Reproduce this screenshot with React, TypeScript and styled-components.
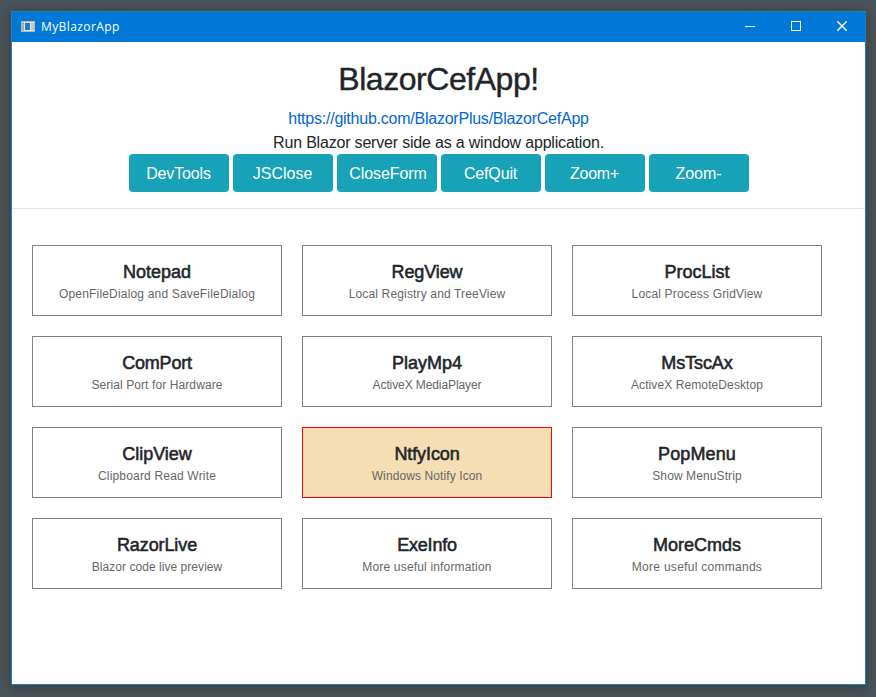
import React from "react";
import styled, { createGlobalStyle } from "styled-components";

const GlobalStyle = createGlobalStyle`
  *, *::before, *::after { box-sizing: border-box; }
  html, body { margin: 0; height: 100%; overflow: hidden; }
  body { font-family: "Liberation Sans", Arial, sans-serif; color: #212529; }
  #root { height: 100%; }
`;

const Desktop = styled.div`
  height: 697px;
  width: 876px;
  padding: 11px 10px 12px 11px;
  background: #4b545b;
  overflow: hidden;
`;

const AppWindow = styled.main`
  height: 674px;
  display: flex;
  flex-direction: column;
  border: 1px solid #1b7fd0;
  background: #fff;
  box-shadow: 0 2px 12px 1px rgba(48, 50, 38, 0.6);
`;

const TitleBar = styled.header`
  height: 30px;
  flex: none;
  display: flex;
  align-items: center;
  padding-left: 9px;
  background: #0078d7;
  color: #fff;
`;

const WindowTitle = styled.span`
  flex: 1;
  margin-left: 6px;
  font: 12px/16px "Open Sans", "Noto Sans", sans-serif;
  letter-spacing: 0.4px;
`;

const WindowButton = styled.span`
  width: 46px;
  height: 30px;
  display: flex;
  align-items: center;
  justify-content: center;
`;

const Hero = styled.section`
  height: 167px;
  flex: none;
  display: flex;
  flex-direction: column;
  align-items: center;
  padding-top: 18px;
  border-bottom: 1px solid #e5e5e5;
`;

const Heading = styled.h1`
  margin: 0 0 9px;
  font-size: 32px;
  line-height: 38px;
  font-weight: 400;
  letter-spacing: -0.45px;
  -webkit-text-stroke: 0.4px currentColor;
`;

const Line = styled.div<{ $spacing: number }>`
  font-size: 16px;
  line-height: 24px;
  white-space: nowrap;
  letter-spacing: ${(p) => p.$spacing}px;
`;

const Link = styled.a`
  color: #0366d6;
  text-decoration: none;
`;

const Actions = styled.div`
  display: flex;
  gap: 4px;
  margin-top: -1px;
`;

const ActionButton = styled.button<{ $spacing: number }>`
  width: 100px;
  height: 38px;
  padding: 2px 0 0;
  border: 0;
  border-radius: 4px;
  background: #17a2b8;
  color: #fff;
  font: 16px/24px "Liberation Sans", Arial, sans-serif;
  letter-spacing: ${(p) => p.$spacing}px;
  white-space: nowrap;

  &:nth-child(3) {
    padding-left: 3px;
  }
`;

const CardGrid = styled.section`
  display: grid;
  grid-template-columns: repeat(3, 250px);
  grid-auto-rows: 71px;
  gap: 20px;
  padding: 36px 20px 0;
`;

const Card = styled.article<{ $active: boolean }>`
  padding-top: 15px;
  border: 1px solid ${(p) => (p.$active ? "#ff0000" : "#808080")};
  background: ${(p) => (p.$active ? "#f5deb3" : "#fff")};
  text-align: center;
  white-space: nowrap;
`;

const CardTitle = styled.h2<{ $spacing: number }>`
  margin: 0;
  font-size: 18px;
  line-height: 22px;
  font-weight: 400;
  -webkit-text-stroke: 0.55px currentColor;
  letter-spacing: ${(p) => p.$spacing}px;
`;

const CardText = styled.p<{ $spacing: number }>`
  margin: 0;
  font-size: 12px;
  line-height: 22px;
  color: #666;
  letter-spacing: ${(p) => p.$spacing}px;
`;

const actions: [string, number][] = [
  ["DevTools", -0.15],
  ["JSClose", 0],
  ["CloseForm", -0.1],
  ["CefQuit", -0.15],
  ["Zoom+", -0.2],
  ["Zoom-", 0],
];

const cards: [string, number, string, number][] = [
  ["Notepad", 0, "OpenFileDialog and SaveFileDialog", 0.18],
  ["RegView", -0.1, "Local Registry and TreeView", 0.15],
  ["ProcList", 0, "Local Process GridView", 0.17],
  ["ComPort", -0.2, "Serial Port for Hardware", 0.1],
  ["PlayMp4", 0, "ActiveX MediaPlayer", -0.1],
  ["MsTscAx", -0.1, "ActiveX RemoteDesktop", 0.1],
  ["ClipView", 0, "Clipboard Read Write", 0.18],
  ["NtfyIcon", -0.1, "Windows Notify Icon", 0.1],
  ["PopMenu", 0.1, "Show MenuStrip", 0.1],
  ["RazorLive", -0.1, "Blazor code live preview", 0.05],
  ["ExeInfo", -0.2, "More useful information", 0.17],
  ["MoreCmds", 0, "More useful commands", 0.28],
];

export default function App() {
  return (
    <>
      <GlobalStyle />
      <Desktop>
        <AppWindow>
          <TitleBar>
            <svg width="14" height="12" viewBox="0 0 14 12" shapeRendering="crispEdges">
              <path fill="#b9b9b9" d="M0 0h14v11H0z" />
              <path fill="#e4e4e4" d="M3 1h10v9H3z" />
              <path fill="#8fa3b5" d="M1 2h2v1H1zM1 4h2v1H1zM1 6h2v1H1zM1 8h2v1H1z" />
              <path fill="#1c7dcc" d="M4 2h5v7H4z" />
              <path fill="#c6c6c6" d="M10 2h3v7h-3z" />
            </svg>
            <WindowTitle>MyBlazorApp</WindowTitle>
            <WindowButton>
              <svg width="10" height="10" shapeRendering="crispEdges">
                <path d="M0 4h10v1H0z" fill="#fff" />
              </svg>
            </WindowButton>
            <WindowButton>
              <svg width="10" height="12" shapeRendering="crispEdges">
                <path d="M.5 .5h9v9h-9z" fill="none" stroke="#fff" />
              </svg>
            </WindowButton>
            <WindowButton>
              <svg width="10" height="12">
                <path d="M.3 .3l9.4 9.4M9.7 .3L.3 9.7" stroke="#fff" strokeWidth="1.3" />
              </svg>
            </WindowButton>
          </TitleBar>
          <Hero>
            <Heading>BlazorCefApp!</Heading>
            <Line $spacing={-0.235}>
              <Link href="#">https://github.com/BlazorPlus/BlazorCefApp</Link>
            </Line>
            <Line $spacing={-0.19}>Run Blazor server side as a window application.</Line>
            <Actions>
              {actions.map(([label, spacing]) => (
                <ActionButton key={label} $spacing={spacing}>{label}</ActionButton>
              ))}
            </Actions>
          </Hero>
          <CardGrid>
            {cards.map(([title, titleSpacing, text, textSpacing]) => (
              <Card key={title} $active={title === "NtfyIcon"}>
                <CardTitle $spacing={titleSpacing}>{title}</CardTitle>
                <CardText $spacing={textSpacing}>{text}</CardText>
              </Card>
            ))}
          </CardGrid>
        </AppWindow>
      </Desktop>
    </>
  );
}
